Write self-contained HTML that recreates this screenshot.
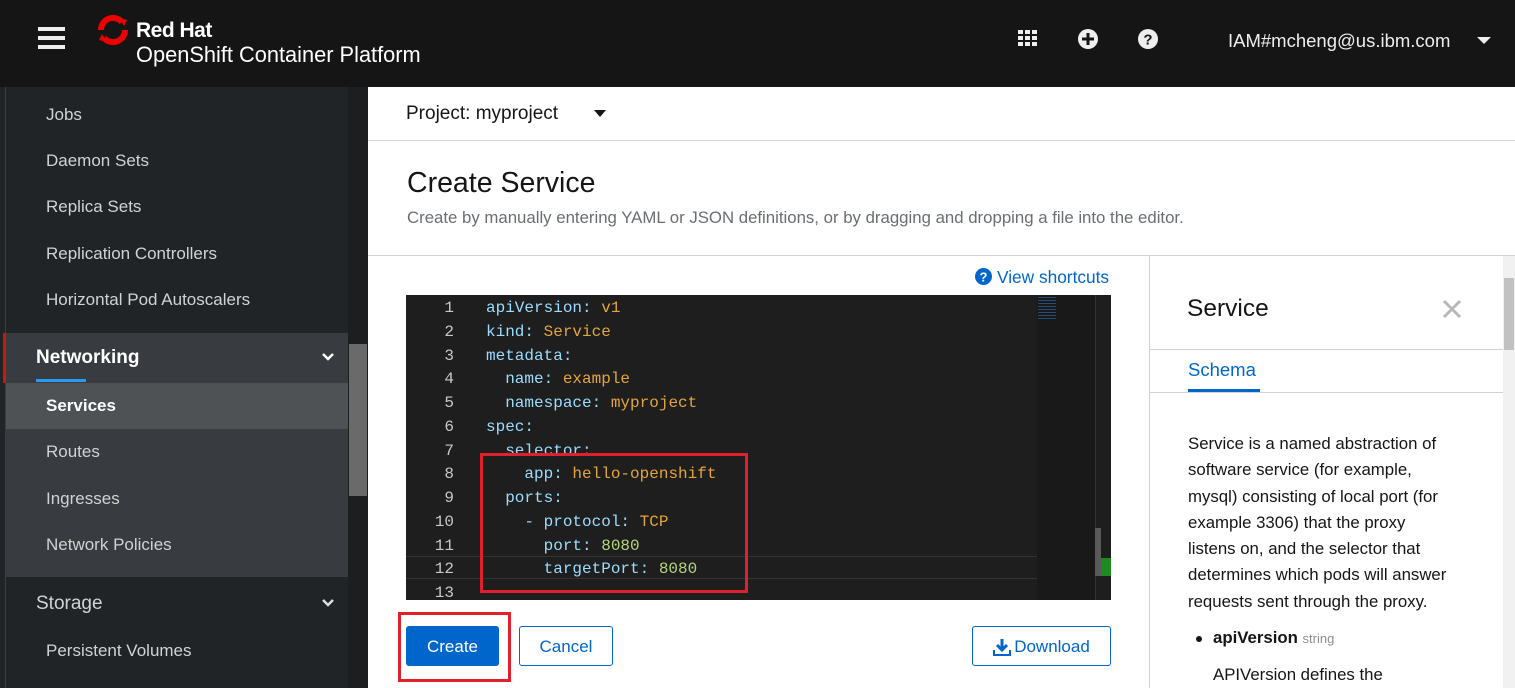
<!DOCTYPE html>
<html><head><meta charset="utf-8">
<style>
*{box-sizing:border-box;margin:0;padding:0}
body{width:1515px;height:688px;overflow:hidden;position:relative;font-family:"Liberation Sans",sans-serif;background:#fff}
.abs{position:absolute}
.hdr{left:0;top:0;width:1515px;height:87px;background:#151515;color:#fff}
.side{left:0;top:87px;width:348px;height:601px;background:#212427;color:#d2d2d2;font-size:17px}
.side div.it{position:absolute;left:46px;white-space:nowrap}
.code{font-family:"Liberation Mono",monospace;font-size:16px;line-height:23.75px;white-space:pre;color:#9cdcfe}
.v{color:#e5a53a}.n{color:#b5d67c}
.ln{position:absolute;left:406px;width:48px;text-align:right;font-family:"Liberation Mono",monospace;font-size:16px;line-height:23.75px;color:#c8c8c8}
.btn{position:absolute;top:626px;height:40px;border-radius:3px;font-size:17px;display:flex;align-items:center;justify-content:center;padding-top:2px}
</style></head><body>
<div class="abs hdr">
  <div class="abs" style="left:38px;top:27px;width:27px;height:4px;background:#eee;box-shadow:0 9px 0 #eee,0 18px 0 #eee"></div>
  <svg class="abs" style="left:95px;top:14px" width="36" height="32" viewBox="0 0 36 32"><path d="M6 16a12 12 0 0 1 21-8" stroke="#e00" stroke-width="6" fill="none"/><path d="M30 16a12 12 0 0 1-21 8" stroke="#e00" stroke-width="6" fill="none"/><path d="M24 4l8 2-3 6z M12 28l-8-2 3-6z" fill="#e00"/></svg>
  <div class="abs" style="left:136px;top:19px;font-size:21px;font-weight:bold;letter-spacing:-0.5px">Red Hat</div>
  <div class="abs" style="left:136px;top:42px;font-size:21.8px">OpenShift Container Platform</div>
  <svg class="abs" style="left:1018px;top:30px" width="20" height="18"><g fill="#eee"><rect x="0" y="0" width="5" height="4"/><rect x="7" y="0" width="5" height="4"/><rect x="14" y="0" width="5" height="4"/><rect x="0" y="6" width="5" height="4"/><rect x="7" y="6" width="5" height="4"/><rect x="14" y="6" width="5" height="4"/><rect x="0" y="12" width="5" height="4"/><rect x="7" y="12" width="5" height="4"/><rect x="14" y="12" width="5" height="4"/></g></svg>
  <svg class="abs" style="left:1078px;top:29px" width="20" height="20"><circle cx="10" cy="10" r="10" fill="#eee"/><path d="M10 4v12M4 10h12" stroke="#151515" stroke-width="3"/></svg>
  <svg class="abs" style="left:1138px;top:29px" width="20" height="20"><circle cx="10" cy="10" r="10" fill="#eee"/><text x="10" y="15.5" text-anchor="middle" font-family="Liberation Sans" font-weight="bold" font-size="15" fill="#151515">?</text></svg>
  <div class="abs" style="left:1228px;top:30px;font-size:18.5px;color:#eee">IAM#mcheng@us.ibm.com</div>
  <div class="abs" style="left:1477px;top:37px;border-left:7px solid transparent;border-right:7px solid transparent;border-top:7px solid #eee"></div>
</div>
<div class="abs side">
  <div class="abs" style="left:5px;top:0;width:1px;height:601px;background:#6b2a2a"></div>
  <div class="it" style="top:18px">Jobs</div>
  <div class="it" style="top:64px">Daemon Sets</div>
  <div class="it" style="top:110px">Replica Sets</div>
  <div class="it" style="top:157px">Replication Controllers</div>
  <div class="it" style="top:203px">Horizontal Pod Autoscalers</div>
  <div class="abs" style="left:6px;top:246px;width:342px;height:244px;background:#383b3f"></div>
  <div class="abs" style="left:3px;top:246px;width:3px;height:50px;background:#c9190b"></div>
  <div class="abs" style="left:36px;top:260px;font-size:19px;font-weight:bold;color:#fff">Networking</div>
  <div class="abs" style="left:36px;top:292px;width:50px;height:3px;background:#2b9af3"></div>
  <svg class="abs" style="left:321px;top:265px" width="14" height="10"><path d="M2 2l5 5 5-5" stroke="#fff" stroke-width="2.5" fill="none"/></svg>
  <div class="abs" style="left:6px;top:296px;width:342px;height:46px;background:#4f5255"></div>
  <div class="it" style="top:309px;color:#fff;font-weight:bold">Services</div>
  <div class="it" style="top:355px">Routes</div>
  <div class="it" style="top:402px">Ingresses</div>
  <div class="it" style="top:448px">Network Policies</div>
  <div class="abs" style="left:36px;top:506px;font-size:19px;color:#d2d2d2">Storage</div>
  <svg class="abs" style="left:321px;top:511px" width="14" height="10"><path d="M2 2l5 5 5-5" stroke="#ddd" stroke-width="2.5" fill="none"/></svg>
  <div class="it" style="top:554px">Persistent Volumes</div>
</div>
<div class="abs" style="left:348px;top:87px;width:20px;height:601px;background:#1d1e20"></div>
<div class="abs" style="left:349px;top:344px;width:18px;height:152px;background:#6a6a6a"></div>
<!-- main -->
<div class="abs" style="left:368px;top:140px;width:1147px;height:1px;background:#d2d2d2"></div>
<div class="abs" style="left:406px;top:103px;font-size:19px;color:#151515">Project: myproject</div>
<div class="abs" style="left:594px;top:110px;border-left:6px solid transparent;border-right:6px solid transparent;border-top:7px solid #151515"></div>
<div class="abs" style="left:407px;top:167px;font-size:28.5px;color:#151515">Create Service</div>
<div class="abs" style="left:407px;top:208px;font-size:16.8px;color:#6a6e73">Create by manually entering YAML or JSON definitions, or by dragging and dropping a file into the editor.</div>
<div class="abs" style="left:368px;top:255px;width:1147px;height:1px;background:#d2d2d2"></div>
<svg class="abs" style="left:975px;top:268px" width="17" height="17"><circle cx="8.5" cy="8.5" r="8.5" fill="#0066cc"/><text x="8.5" y="13.5" text-anchor="middle" font-family="Liberation Sans" font-weight="bold" font-size="13" fill="#fff">?</text></svg>
<div class="abs" style="left:997px;top:267px;font-size:17.3px;color:#0066cc">View shortcuts</div>
<!-- editor -->
<div class="abs" style="left:406px;top:295px;width:705px;height:305px;background:#1e1e1e;overflow:hidden">
  <div class="abs" style="left:0;top:261px;width:631px;height:23px;border-top:1px solid #333;border-bottom:1px solid #333"></div>
  <div class="abs" style="left:631px;top:0;width:58px;height:305px;background:#191919"></div>
  <div class="abs" style="left:689px;top:0;width:1px;height:305px;background:#333"></div>
  <div class="abs" style="left:689px;top:233px;width:6px;height:48px;background:#5a5a5a"></div>
  <div class="abs" style="left:695px;top:263px;width:10px;height:18px;background:#1f8a1f"></div>
  <div class="abs" style="left:632px;top:2px;width:18px;height:22px;background:repeating-linear-gradient(#2a4a7a 0 1px,transparent 1px 3px)"></div>
</div>
<div class="ln" style="top:297px">1<br>2<br>3<br>4<br>5<br>6<br>7<br>8<br>9<br>10<br>11<br>12<br>13</div>
<div class="abs code" style="left:486px;top:297px">apiVersion: <span class="v">v1</span>
kind: <span class="v">Service</span>
metadata:
  name: <span class="v">example</span>
  namespace: <span class="v">myproject</span>
spec:
  selector:
    app: <span class="v">hello-openshift</span>
  ports:
    - protocol: <span class="v">TCP</span>
      port: <span class="n">8080</span>
      targetPort: <span class="n">8080</span></div>
<div class="abs" style="left:480px;top:453px;width:268px;height:140px;border:3px solid #e0202a"></div>
<div class="btn" style="left:406px;width:93px;background:#0066cc;color:#fff">Create</div>
<div class="abs" style="left:398px;top:612px;width:113px;height:70px;border:3px solid #e0202a"></div>
<div class="btn" style="left:519px;width:94px;border:1px solid #0066cc;color:#0066cc">Cancel</div>
<div class="btn" style="left:972px;width:139px;border:1px solid #0066cc;color:#0066cc"><svg width="18" height="18" style="margin-right:3px"><path d="M9 1v10M4 7l5 5 5-5" stroke="#0066cc" stroke-width="3" fill="none"/><path d="M1 12v5h16v-5" stroke="#0066cc" stroke-width="2" fill="none"/></svg>Download</div>
<!-- right panel -->
<div class="abs" style="left:1149px;top:256px;width:1px;height:432px;background:#d2d2d2"></div>
<div class="abs" style="left:1187px;top:295px;font-size:24.5px;color:#151515">Service</div>
<svg class="abs" style="left:1442px;top:299px" width="20" height="20"><path d="M2 2l16 16M18 2L2 18" stroke="#b8b8b8" stroke-width="3"/></svg>
<div class="abs" style="left:1150px;top:349px;width:353px;height:1px;background:#d2d2d2"></div>
<div class="abs" style="left:1188px;top:359px;font-size:18.5px;color:#0066cc">Schema</div>
<div class="abs" style="left:1188px;top:389px;width:72px;height:3px;background:#0066cc"></div>
<div class="abs" style="left:1150px;top:392px;width:353px;height:1px;background:#d2d2d2"></div>
<div class="abs" style="left:1188px;top:431px;width:266px;font-size:16.8px;line-height:26.3px;color:#151515">Service is a named abstraction of software service (for example, mysql) consisting of local port (for example 3306) that the proxy listens on, and the selector that determines which pods will answer requests sent through the proxy.</div>
<div class="abs" style="left:1196px;top:636px;width:6px;height:6px;border-radius:3px;background:#151515"></div>
<div class="abs" style="left:1213px;top:628px;font-size:16.8px;font-weight:bold;color:#151515">apiVersion <span style="font-size:13px;font-weight:normal;color:#8a8d90">string</span></div>
<div class="abs" style="left:1213px;top:665px;font-size:16.8px;color:#151515">APIVersion defines the</div>
<div class="abs" style="left:1503px;top:256px;width:12px;height:432px;background:#f1f1f1"></div>
<div class="abs" style="left:1504px;top:278px;width:10px;height:72px;background:#c1c1c1"></div>
</body></html>
